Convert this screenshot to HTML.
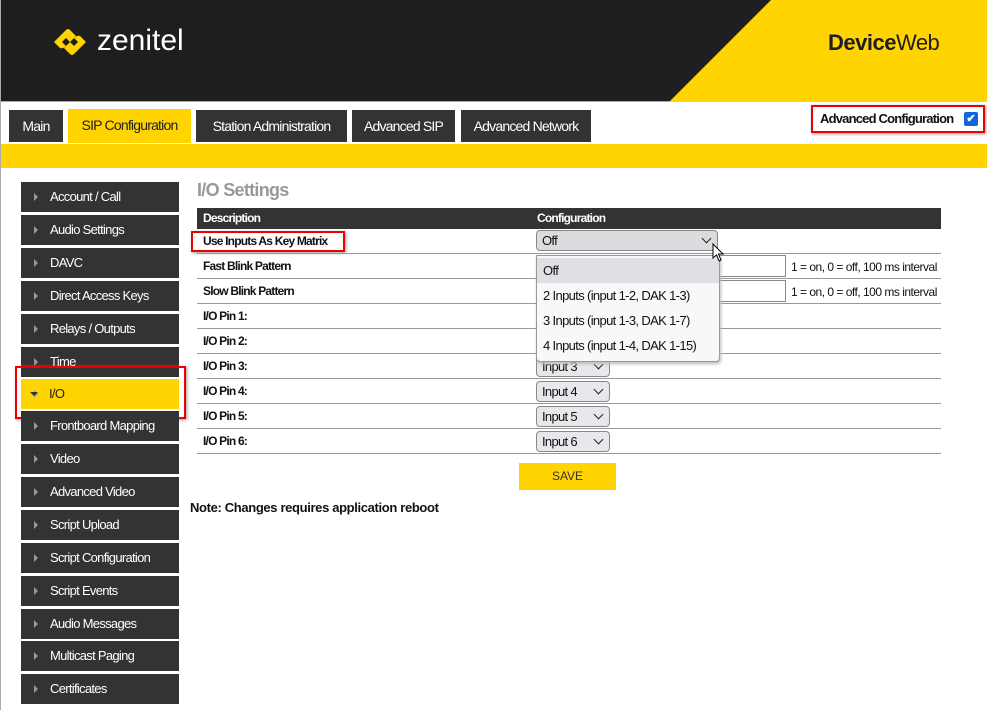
<!DOCTYPE html>
<html><head><style>
*{margin:0;padding:0;box-sizing:border-box}
body{width:987px;height:710px;overflow:hidden;background:#fff;font-family:"Liberation Sans",sans-serif;font-size:12px;color:#111;position:relative;border-left:1px solid #aaa;letter-spacing:-0.7px}
.abs{position:absolute}
.hdr{left:0;top:0;width:987px;height:102px;background:#1e1e1e;border-bottom:1px solid #aaa}
.tab{position:absolute;top:110px;height:32px;background:#333;color:#fff;font-size:14px;line-height:32px;text-align:center;letter-spacing:-0.8px;white-space:nowrap}
.side{position:absolute;left:20px;width:158px;height:30px;background:#333;color:#fff;font-size:13px;line-height:30px;padding-left:29px;white-space:nowrap}
.side:before{content:"";position:absolute;left:13px;top:11px;border-left:4px solid #999;border-top:4px solid transparent;border-bottom:4px solid transparent}
.row{position:absolute;left:196px;width:744px;height:25px;border-bottom:1px solid #999;font-weight:bold;font-size:12px;line-height:25px;padding-left:6px;letter-spacing:-0.8px}
.sel{position:absolute;left:535px;width:74px;height:21px;border:1px solid #888;border-radius:4px;background:#e8e8ec;font-size:13px;line-height:19px;padding-left:5px}
.chev{position:absolute;right:7px;top:4px;width:7px;height:7px;border-right:1.5px solid #222;border-bottom:1.5px solid #222;transform:rotate(45deg)}
.inp{position:absolute;left:716px;width:69px;height:22px;border:1px solid #888;background:#fff}
.hint{position:absolute;left:790px;font-size:12px;letter-spacing:-0.5px;white-space:nowrap}
.opt{height:25px;line-height:25px;padding-left:6px;font-size:13px;white-space:nowrap;letter-spacing:-0.65px}
</style></head><body>
<div class="abs hdr"></div>
<svg class="abs" style="left:0;top:0" width="987" height="102"><polygon points="770,0 987,0 987,102 668,102" fill="#ffd400"/></svg>
<svg class="abs" style="left:50px;top:23px" width="38" height="38" viewBox="0 0 38 38"><path d="M3 19 L15 7 Q17 5 19 7 L25 13 L19 19 L15 15 L11 19 L15 23 Q12 26 9 25 Z" fill="#ffd400"/><path d="M35 19 L23 31 Q21 33 19 31 L13 25 L19 19 L23 23 L27 19 L23 15 Q26 12 29 13 Z" fill="#ffd400"/></svg>
<div class="abs" style="left:96px;top:24px;color:#fff;font-size:30px;letter-spacing:0">zenitel</div>
<div class="abs" style="left:827px;top:30px;color:#1e1e1e;font-size:22px;letter-spacing:-0.5px"><b>Device</b>Web</div>

<div class="tab" style="left:8px;width:54px">Main</div>
<div class="tab" style="left:67px;width:123px;top:109px;height:34px;background:#ffd400;color:#222">SIP Configuration</div>
<div class="tab" style="left:195px;width:151px">Station Administration</div>
<div class="tab" style="left:351px;width:103px">Advanced SIP</div>
<div class="tab" style="left:460px;width:130px">Advanced Network</div>
<div class="abs" style="left:810px;top:105px;width:174px;height:28px;border:2px solid #e00;box-shadow:1px 1px 3px #999;font-size:13px;font-weight:bold;line-height:24px;padding-left:7px;white-space:nowrap;letter-spacing:-0.8px">Advanced Configuration <span style="position:absolute;right:5px;top:5px;width:14px;height:14px;background:#1565d8;border-radius:2px;color:#fff;font-size:11px;line-height:14px;text-align:center;letter-spacing:0">✔</span></div>
<div class="abs" style="left:0;top:144px;width:987px;height:24px;background:#ffd400"></div>

<div class="side" style="top:182px">Account / Call</div>
<div class="side" style="top:215px">Audio Settings</div>
<div class="side" style="top:248px">DAVC</div>
<div class="side" style="top:281px">Direct Access Keys</div>
<div class="side" style="top:314px">Relays / Outputs</div>
<div class="side" style="top:347px">Time</div>
<div class="side" style="top:379px;background:#ffd400;color:#222;padding-left:28px">I/O</div>
<div class="abs" style="left:29px;top:392px;border-top:4px solid #333;border-left:4px solid transparent;border-right:4px solid transparent"></div>
<div class="abs" style="left:14px;top:366px;width:171px;height:53px;border:2px solid #e00;box-shadow:1px 1px 3px #999"></div>
<div class="side" style="top:411px">Frontboard Mapping</div>
<div class="side" style="top:444px">Video</div>
<div class="side" style="top:477px">Advanced Video</div>
<div class="side" style="top:510px">Script Upload</div>
<div class="side" style="top:543px">Script Configuration</div>
<div class="side" style="top:576px">Script Events</div>
<div class="side" style="top:609px">Audio Messages</div>
<div class="side" style="top:641px">Multicast Paging</div>
<div class="side" style="top:674px">Certificates</div>

<div class="abs" style="left:196px;top:180px;font-size:18px;font-weight:bold;color:#999">I/O Settings</div>
<div class="abs" style="left:196px;top:208px;width:744px;height:21px;background:#333;color:#fff;font-weight:bold;line-height:21px;padding-left:6px;letter-spacing:-0.8px">Description<span style="position:absolute;left:340px">Configuration</span></div>
<div class="row" style="top:229px">Use Inputs As Key Matrix</div>
<div class="row" style="top:254px">Fast Blink Pattern</div>
<div class="row" style="top:279px">Slow Blink Pattern</div>
<div class="row" style="top:304px">I/O Pin 1:</div>
<div class="row" style="top:329px">I/O Pin 2:</div>
<div class="row" style="top:354px">I/O Pin 3:</div>
<div class="row" style="top:379px">I/O Pin 4:</div>
<div class="row" style="top:404px">I/O Pin 5:</div>
<div class="row" style="top:429px">I/O Pin 6:</div>
<div class="abs" style="left:190px;top:231px;width:154px;height:21px;border:2px solid #e00;box-shadow:1px 1px 3px #999"></div>

<div class="inp" style="top:255px"></div><div class="hint" style="top:260px">1 = on, 0 = off, 100 ms interval</div>
<div class="inp" style="top:280px"></div><div class="hint" style="top:285px">1 = on, 0 = off, 100 ms interval</div>
<div class="sel" style="top:356px">Input 3<i class="chev"></i></div>
<div class="sel" style="top:381px">Input 4<i class="chev"></i></div>
<div class="sel" style="top:406px">Input 5<i class="chev"></i></div>
<div class="sel" style="top:431px">Input 6<i class="chev"></i></div>
<div class="sel" style="top:230px;width:182px;background:#dcdce0">Off<i class="chev"></i></div>
<div class="abs" style="left:535px;top:255px;width:184px;height:107px;background:#f8f8fa;border:1px solid #999;border-radius:0 0 4px 4px;box-shadow:1px 2px 3px #bbb;padding-top:2px">
<div class="opt" style="background:#e0e0e4">Off</div><div class="opt">2 Inputs (input 1-2, DAK 1-3)</div><div class="opt">3 Inputs (input 1-3, DAK 1-7)</div><div class="opt">4 Inputs (input 1-4, DAK 1-15)</div></div>
<svg class="abs" style="left:711px;top:243px" width="14" height="20"><path d="M1 1 L1 15 L4.5 12 L7 18 L9 17 L6.5 11 L11 11 Z" fill="#fff" stroke="#000"/></svg>

<div class="abs" style="left:518px;top:463px;width:97px;height:27px;background:#ffd400;text-align:center;line-height:27px;font-size:12px;color:#333;letter-spacing:0">SAVE</div>
<div class="abs" style="left:189px;top:500px;font-size:13px;font-weight:bold;letter-spacing:-0.35px">Note: Changes requires application reboot</div>
</body></html>
